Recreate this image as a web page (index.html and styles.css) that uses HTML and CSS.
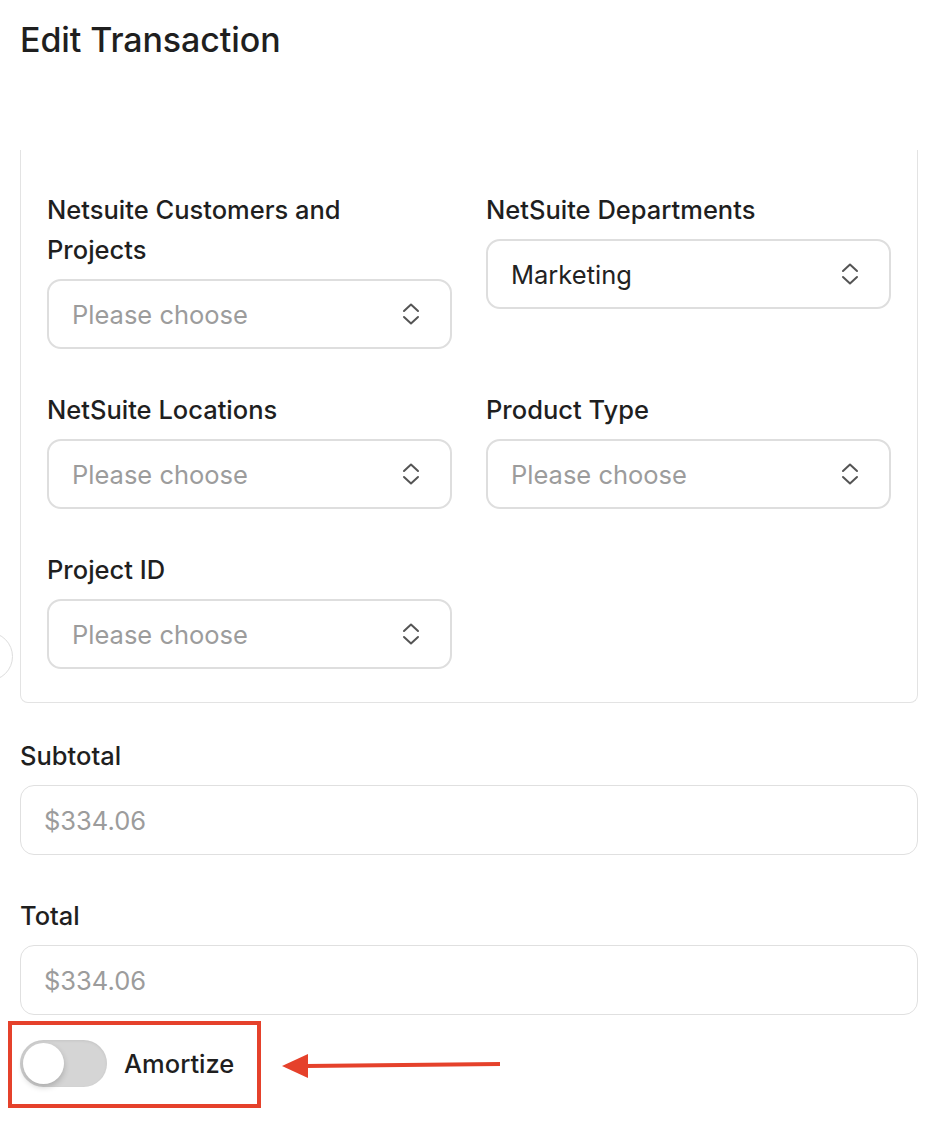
FILE: index.html
```html
<!DOCTYPE html>
<html lang="en">
<head>
  <meta charset="UTF-8">
  <title>Edit Transaction</title>
  <link rel="stylesheet" href="styles.css">
</head>
<body>
  <div class="page">
    <h1 class="title">Edit Transaction</h1>

    <div class="panel">
      <div class="grid">
        <div class="field">
          <label>Netsuite Customers and Projects</label>
          <div class="select placeholder">
            <span>Please choose</span>
            <svg class="chev" width="18" height="22" viewBox="0 0 18 22"><path d="M2 8 L9 1.5 L16 8 M2 14 L9 20.5 L16 14" /></svg>
          </div>
        </div>
        <div class="field">
          <label>NetSuite Departments</label>
          <div class="select">
            <span>Marketing</span>
            <svg class="chev" width="18" height="22" viewBox="0 0 18 22"><path d="M2 8 L9 1.5 L16 8 M2 14 L9 20.5 L16 14" /></svg>
          </div>
        </div>
        <div class="field">
          <label>NetSuite Locations</label>
          <div class="select placeholder">
            <span>Please choose</span>
            <svg class="chev" width="18" height="22" viewBox="0 0 18 22"><path d="M2 8 L9 1.5 L16 8 M2 14 L9 20.5 L16 14" /></svg>
          </div>
        </div>
        <div class="field">
          <label>Product Type</label>
          <div class="select placeholder">
            <span>Please choose</span>
            <svg class="chev" width="18" height="22" viewBox="0 0 18 22"><path d="M2 8 L9 1.5 L16 8 M2 14 L9 20.5 L16 14" /></svg>
          </div>
        </div>
        <div class="field">
          <label>Project ID</label>
          <div class="select placeholder">
            <span>Please choose</span>
            <svg class="chev" width="18" height="22" viewBox="0 0 18 22"><path d="M2 8 L9 1.5 L16 8 M2 14 L9 20.5 L16 14" /></svg>
          </div>
        </div>
      </div>
    </div>

    <div class="field wide">
      <label>Subtotal</label>
      <div class="input">$334.06</div>
    </div>
    <div class="field wide">
      <label>Total</label>
      <div class="input">$334.06</div>
    </div>

    <div class="toggle-row">
      <div class="highlight">
        <div class="switch"><div class="knob"></div></div>
        <span class="switch-label">Amortize</span>
      </div>
      <svg class="arrow" width="222" height="30" viewBox="0 0 222 30">
        <path d="M24 15 L218 13" stroke="#e5412b" stroke-width="4" fill="none" />
        <path d="M0 15 L26 3 L26 27 Z" fill="#e5412b" />
      </svg>
    </div>
  </div>
  <div class="side-dot"></div>
</body>
</html>
```

FILE: styles.css
```css
* {
  margin: 0;
  padding: 0;
  box-sizing: border-box;
}
body {
  background: #ffffff;
  font-family: Inter, "Noto Sans", "Liberation Sans", sans-serif;
  color: #1f1f1f;
  position: relative;
}
.page {
  width: 898px;
  margin-left: 20px;
  padding-top: 20px;
}
.title {
  font-size: 34px;
  line-height: 40px;
  font-weight: 500;
  letter-spacing: -0.1px;
}
.panel {
  margin-top: 90px;
  border: 1px solid #e3e3e3;
  border-top: 0;
  border-radius: 0 0 8px 8px;
  padding: 40px 26px 33px 26px;
}
.grid {
  display: grid;
  grid-template-columns: 405px 405px;
  column-gap: 34px;
  row-gap: 41px;
  align-items: start;
}
.field label {
  display: block;
  font-size: 25.5px;
  line-height: 40px;
  font-weight: 500;
  margin-bottom: 9px;
  padding-right: 40px;
}
.select,
.input {
  height: 70px;
  border: 2px solid #dedede;
  border-radius: 14px;
  display: flex;
  align-items: center;
  justify-content: space-between;
  padding: 0 30px 0 23px;
  font-size: 25.5px;
  color: #222222;
}
.select.placeholder,
.input {
  color: #9c9c9c;
}
.chev path {
  stroke: #555555;
  stroke-width: 2;
  fill: none;
  stroke-linecap: round;
  stroke-linejoin: round;
}
.field.wide {
  margin-top: 33px;
}
.field.wide + .field.wide {
  margin-top: 41px;
}
.input {
  border-width: 1px;
  border-color: #e0e0e0;
  padding-left: 23px;
}
.toggle-row {
  display: flex;
  align-items: center;
  margin-top: 6px;
  margin-left: -12px;
}
.highlight {
  width: 253px;
  height: 87px;
  border: 4px solid #e5412b;
  display: flex;
  align-items: center;
  gap: 17px;
  padding-left: 8px;
  padding-bottom: 2px;
}
.switch {
  width: 87px;
  height: 47px;
  border-radius: 24px;
  background: #d5d5d5;
  box-shadow: inset 0 1px 3px rgba(0, 0, 0, 0.08);
  padding: 3px;
}
.knob {
  width: 41px;
  height: 41px;
  border-radius: 50%;
  background: #ffffff;
  box-shadow: 0 3px 6px rgba(0, 0, 0, 0.2);
}
.switch-label {
  font-size: 25.5px;
  font-weight: 500;
}
.arrow {
  margin-left: 21px;
  margin-top: 2px;
}
.side-dot {
  position: absolute;
  left: -36px;
  top: 632px;
  width: 49px;
  height: 49px;
  border-radius: 50%;
  border: 1px solid #dddddd;
  background: #ffffff;
}
```
